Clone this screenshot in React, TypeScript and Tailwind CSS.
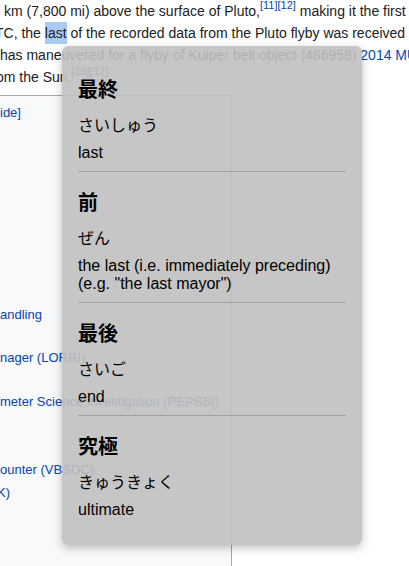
import React from 'react';

type Entry = { word: string; kana: string; gloss: string[] };

const entries: Entry[] = [
  { word: '最終', kana: 'さいしゅう', gloss: ['last'] },
  { word: '前', kana: 'ぜん', gloss: ['the last (i.e. immediately preceding)', '(e.g. "the last mayor")'] },
  { word: '最後', kana: 'さいご', gloss: ['end'] },
  { word: '究極', kana: 'きゅうきょく', gloss: ['ultimate'] },
];

const jp = { fontFamily: '"Noto Sans CJK JP", "Liberation Sans", sans-serif' };

const Sup: React.FC<{ children: React.ReactNode }> = ({ children }) => (
  <sup className="text-[11px] text-[#0645ad] relative top-[-1px]" style={{ verticalAlign: 'super', lineHeight: 0 }}>
    {children}
  </sup>
);

const Popup: React.FC = () => (
  <div className="absolute left-[62px] top-[46px] w-[300px] h-[499px] rounded-[6px] bg-[rgba(192,192,192,0.9)] shadow-[0_3px_10px_rgba(0,0,0,0.25)] px-4 pt-[13px] text-black">
    {entries.map((e, i) => (
      <div key={e.word} className={i > 0 ? 'border-t border-[#9ca2ab]' : ''}>
        <div className="pt-[16px] pb-[9px]">
          <div className="text-[20px] font-bold leading-[28px]" style={jp}>{e.word}</div>
          <div className="mt-[10px] text-[16px] leading-[22px]" style={jp}>{e.kana}</div>
          <div className="mt-[9px] text-[16px] leading-[18px]">
            {e.gloss.map((g) => (
              <div key={g}>{g}</div>
            ))}
          </div>
        </div>
      </div>
    ))}
  </div>
);

export default function App() {
  return (
    <div
      className="relative w-[409px] h-[566px] overflow-hidden bg-white text-[#202122]"
      style={{ fontFamily: '"Liberation Sans", Arial, sans-serif' }}
    >
      {/* article paragraph, clipped at the left */}
      <div className="text-[14px] leading-[22px] whitespace-nowrap">
        <div className="pl-[4px]">
          km (7,800 mi) above the surface of Pluto,<Sup>[11][12]</Sup> making it the first spacecraft
        </div>
        <div className="ml-[-5px]">
          TC, the <span className="bg-[#a9cbf3] py-[3px]">last</span> of the recorded data from the Pluto flyby was received by
        </div>
        <div>
          has maneuvered for a flyby of Kuiper belt object (486958) <span className="text-[#0645ad]">2014 MU69</span>
        </div>
        <div className="ml-[-4px]">
          om the Sun.<Sup>[16][17]</Sup>
        </div>
      </div>

      {/* infobox */}
      <div className="mt-[7px] w-[232px] h-[480px] border-t border-r border-[#a2a9b1] bg-[#f8f9fa] text-[13px] leading-[18px] text-[#0645ad] whitespace-nowrap">
        <div className="pt-[8px]">ide]</div>
        <div className="mt-[184px]">andling</div>
        <div className="mt-[25px]">nager (LORRI)</div>
        <div className="mt-[26px]">meter Science Investigation (PEPSSI)</div>
        <div className="mt-[50px]">ounter (VBSDC)</div>
        <div className="mt-[5px] ml-[-3px]">K)</div>
      </div>

      <Popup />
    </div>
  );
}
